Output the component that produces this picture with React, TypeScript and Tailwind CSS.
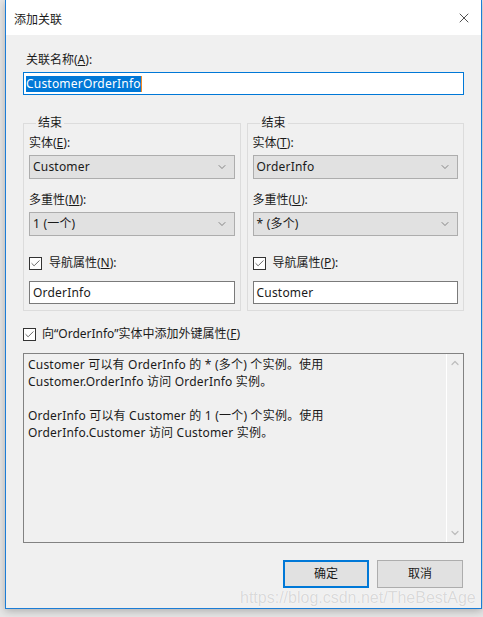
import { Check, ChevronDown, ChevronUp, X } from "lucide-react";

const font = "font-['Noto_Sans','Noto_Sans_CJK_SC',sans-serif]";

function Combo({ value }: { value: string }) {
  return (
    <div className="flex h-[24px] items-center justify-between border border-[#adadad] bg-[#e1e1e1] pl-[3px] pr-[6px] text-[12px] tracking-[0.2px] text-[#1a1a1a]">
      <span>{value}</span>
      <ChevronDown className="h-[12px] w-[12px] text-[#444444]" strokeWidth={1.2} />
    </div>
  );
}

function CheckBox() {
  return (
    <span className="flex h-[13px] w-[13px] shrink-0 items-center justify-center border border-[#333333] bg-white">
      <Check className="h-[11px] w-[11px] text-[#333333]" strokeWidth={1.6} />
    </span>
  );
}

function EndGroup({
  entityKey,
  entity,
  multKey,
  mult,
  navKey,
  nav,
}: {
  entityKey: string;
  entity: string;
  multKey: string;
  mult: string;
  navKey: string;
  nav: string;
}) {
  return (
    <fieldset className="border border-[#dcdcdc] px-[5px] pb-[6px]">
      <legend className="ml-[7px] px-[2px] text-[12px] leading-[16px] text-[#1a1a1a]">结束</legend>
      <div className="mt-[4px] text-[12px] leading-[16px] text-[#1a1a1a]">
        实体(<u>{entityKey}</u>):
      </div>
      <div className="mt-[4px]">
        <Combo value={entity} />
      </div>
      <div className="mt-[13px] text-[12px] leading-[16px] text-[#1a1a1a]">
        多重性(<u>{multKey}</u>):
      </div>
      <div className="mt-[4px]">
        <Combo value={mult} />
      </div>
      <div className="mt-[19px] flex items-center gap-[7px] text-[12px] leading-[16px] text-[#1a1a1a]">
        <CheckBox />
        <span>
          导航属性(<u>{navKey}</u>):
        </span>
      </div>
      <div className="mt-[10px] flex h-[23px] items-center border border-[#7a7a7a] bg-white pl-[3px] text-[12px] tracking-[0.2px] text-[#1a1a1a]">
        {nav}
      </div>
    </fieldset>
  );
}

export default function App() {
  return (
    <div className={`relative h-[617px] w-[483px] overflow-hidden bg-[#e6e6e6] ${font}`}>
      {/* Dialog window */}
      <div className="ml-[5px] flex h-[609px] w-[477px] flex-col border-x border-b border-[#1c7dd6] bg-[#f0f0f0] shadow-[0_2px_8px_rgba(0,0,0,0.25)]">
        {/* Title bar */}
        <div className="flex h-[35px] shrink-0 items-center justify-between bg-white pl-[8px] pr-[6px]">
          <span className="pt-[4px] text-[12px] text-[#1a1a1a]">添加关联</span>
          <X className="mr-[3px] h-[16px] w-[16px] text-[#111111]" strokeWidth={1.1} />
        </div>

        <div className="flex flex-1 flex-col px-[17px]">
          <div className="mt-[17px] pl-[3px] text-[12px] leading-[16px] text-[#1a1a1a]">
            关联名称(<u>A</u>):
          </div>
          <div className="mt-[4px] flex h-[23px] items-center border border-[#0078d7] bg-white pl-[2px]">
            <span className="bg-[#0078d7] text-[12px] leading-[16px] tracking-[0.2px] text-white">CustomerOrderInfo</span>
            <span className="h-[16px] w-[1px] bg-[#f08a24]" />
          </div>

          <div className="mt-[20px] grid grid-cols-2 gap-[6px]">
            <EndGroup
              entityKey="E"
              entity="Customer"
              multKey="M"
              mult="1 (一个)"
              navKey="N"
              nav="OrderInfo"
            />
            <EndGroup
              entityKey="T"
              entity="OrderInfo"
              multKey="U"
              mult="* (多个)"
              navKey="P"
              nav="Customer"
            />
          </div>

          <div className="mt-[15px] flex items-center gap-[6px] text-[12px] leading-[16px] text-[#1a1a1a]">
            <CheckBox />
            <span>
              向“OrderInfo”实体中添加外键属性(<u>F</u>)
            </span>
          </div>

          {/* Description box */}
          <div className="mt-[11px] flex h-[190px] border border-[#828282] bg-[#f0f0f0]">
            <div className="flex-1 pl-[4px] pt-[2px] text-[12px] leading-[17px] tracking-[0.2px] text-[#1a1a1a]">
              <div>Customer 可以有 OrderInfo 的 * (多个) 个实例。使用</div>
              <div>Customer.OrderInfo 访问 OrderInfo 实例。</div>
              <div className="h-[17px]" />
              <div>OrderInfo 可以有 Customer 的 1 (一个) 个实例。使用</div>
              <div>OrderInfo.Customer 访问 Customer 实例。</div>
            </div>
            <div className="flex w-[17px] flex-col items-center justify-between border-l border-white py-[3px]">
              <ChevronUp className="h-[12px] w-[12px] text-[#bdbdbd]" strokeWidth={2.4} />
              <ChevronDown className="h-[12px] w-[12px] text-[#bdbdbd]" strokeWidth={2.4} />
            </div>
          </div>

          <div className="mt-[17px] flex justify-end gap-[8px] pr-[1px]">
            <button className="flex h-[28px] w-[86px] items-center justify-center border-2 border-[#0078d7] bg-[#e1e1e1] text-[12px] text-[#1a1a1a]">
              确定
            </button>
            <button className="flex h-[28px] w-[86px] items-center justify-center border border-[#adadad] bg-[#e1e1e1] text-[12px] text-[#1a1a1a]">
              取消
            </button>
          </div>
        </div>
      </div>

      {/* Watermark */}
      <div className="absolute left-[240px] top-[588px] font-['Liberation_Sans',Arial,sans-serif] text-[16px] leading-[20px] text-[#d9d9d9] [text-shadow:0_0_1px_#ffffff,0_0_1px_#ffffff]">
        https://blog.csdn.net/TheBestAge
      </div>
    </div>
  );
}
